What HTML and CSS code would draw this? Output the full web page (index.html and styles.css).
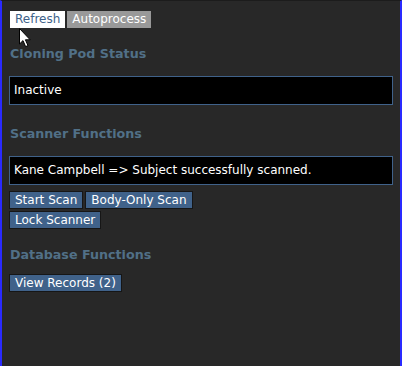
FILE: index.html
```html
<!DOCTYPE html>
<html lang="en">
<head>
    <meta charset="UTF-8">
    <title>Cloning Console</title>
    <link rel="stylesheet" href="styles.css">
</head>
<body>
    <div class="window">
        <div class="toolbar">
            <a class="btn btn-selected">Refresh</a>
            <a class="btn btn-disabled">Autoprocess</a>
        </div>

        <h3>Cloning Pod Status</h3>
        <div class="statusbox">Inactive</div>

        <h3>Scanner Functions</h3>
        <div class="statusbox">Kane Campbell =&gt; Subject successfully scanned.</div>
        <div class="btn-row">
            <a class="btn">Start Scan</a>
            <a class="btn">Body-Only Scan</a>
        </div>
        <div class="btn-row">
            <a class="btn">Lock Scanner</a>
        </div>

        <h3>Database Functions</h3>
        <div class="btn-row">
            <a class="btn">View Records (2)</a>
        </div>

        <svg class="cursor" width="13" height="20" viewBox="0 0 13 20">
            <path d="M0.5 0.5 L0.5 16 L4 12.6 L6.6 18.6 L9 17.6 L6.4 11.8 L11.2 11.8 Z" fill="#fff" stroke="#000" stroke-width="1"/>
        </svg>
    </div>
</body>
</html>
```

FILE: styles.css
```css
html, body {
    margin: 0;
    padding: 0;
    height: 100%;
    background: #282828;
}

body {
    font-family: 'DejaVu Sans', Verdana, sans-serif;
    font-size: 12px;
    color: #ffffff;
}

.window {
    position: relative;
    box-sizing: border-box;
    height: 366px;
    width: 402px;
    border-left: 2px solid #2a2aff;
    border-right: 2px solid #2a2aff;
    border-top: 1px solid #1c1c1c;
    padding: 10px 7px 0 7px;
}

.toolbar {
    display: flex;
    gap: 2px;
    padding-left: 1px;
}

.btn {
    display: inline-block;
    background: #40628a;
    color: #ffffff;
    border: 1px solid #161616;
    padding: 0 5px;
    line-height: 16px;
    white-space: nowrap;
    cursor: default;
}

.toolbar .btn {
    line-height: 15px;
    padding: 0 4px;
}

.btn-selected {
    background: #ffffff;
    color: #40628a;
    border-color: #ffffff;
}

.btn-disabled {
    background: #999999;
    color: #ffffff;
    border-color: #999999;
}

h3 {
    margin: 18px 0 14px 1px;
    font-size: 12.7px;
    line-height: 16px;
    color: #517087;
}

.statusbox {
    background: #000000;
    border: 1px solid #40628a;
    padding: 6px 4px;
    line-height: 15px;
}

.statusbox + .btn-row {
    margin-top: 6px;
}

.btn-row {
    display: flex;
    gap: 2px;
    margin-bottom: 2px;
}

.btn-row + h3 {
    margin-top: 18px;
    margin-bottom: 11px;
}

.statusbox + h3 {
    margin-top: 21px;
}

.cursor {
    position: absolute;
    left: 17px;
    top: 27px;
}
```
